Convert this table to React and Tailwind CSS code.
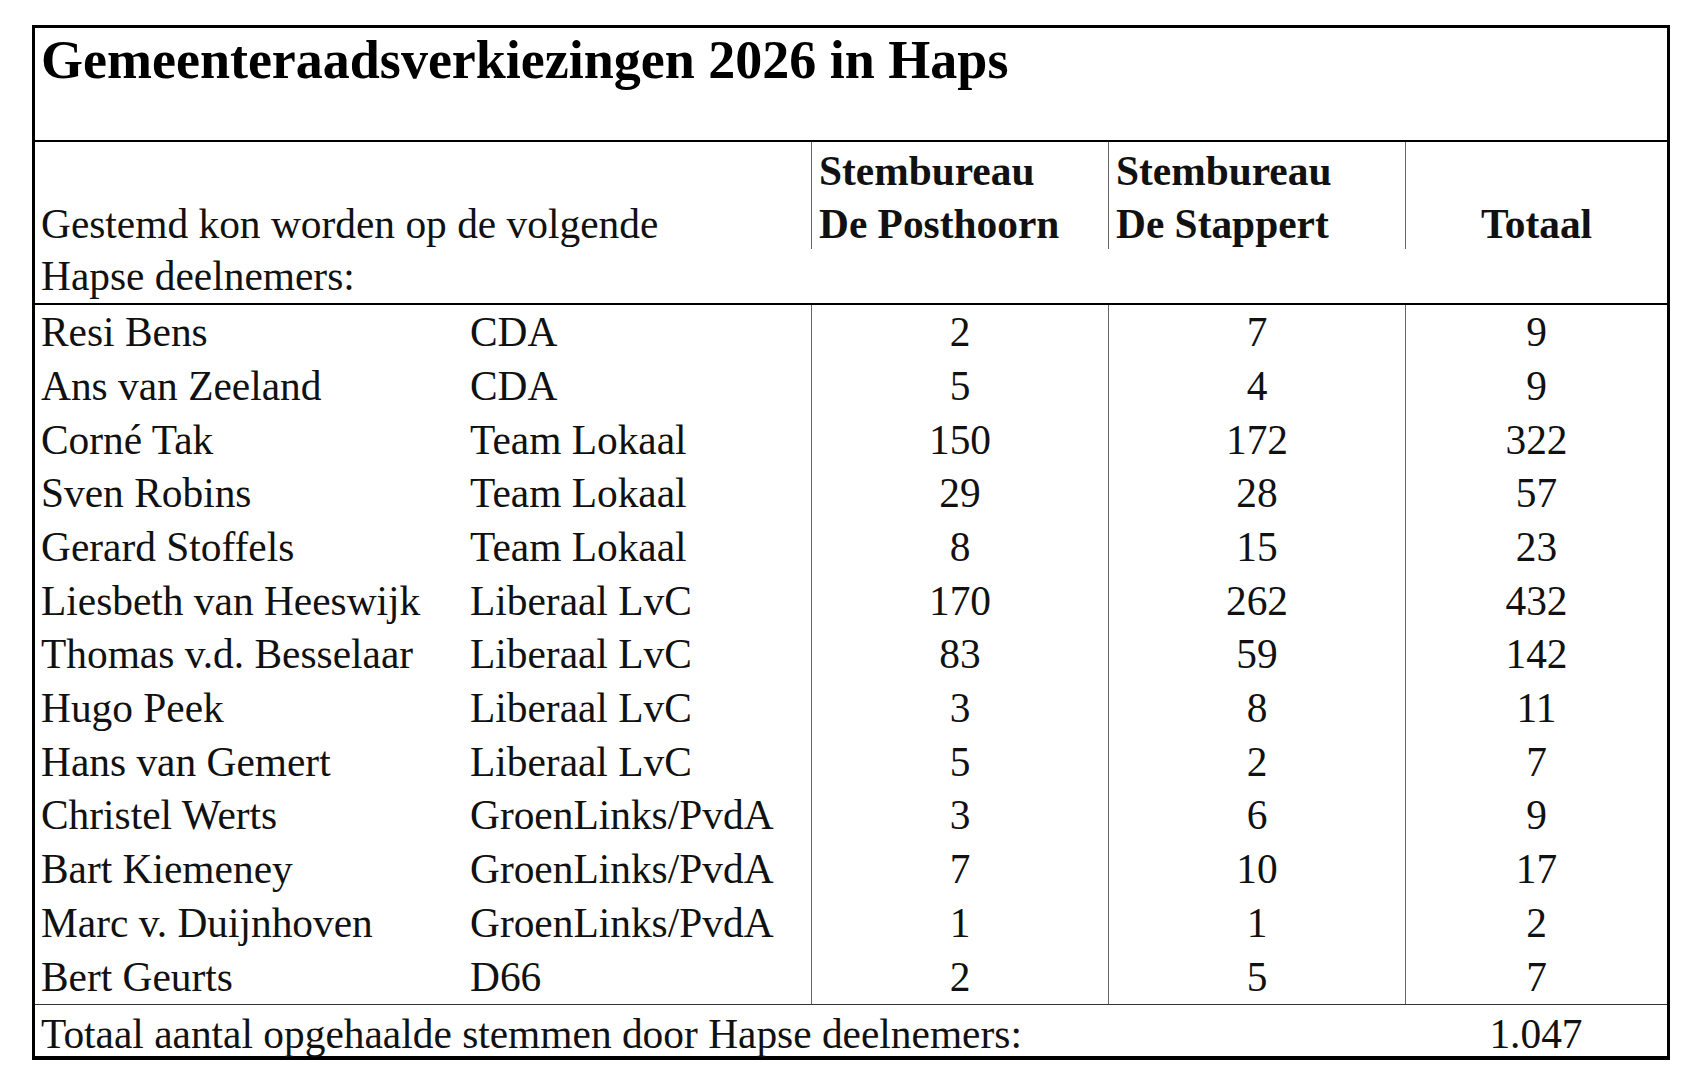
import React from "react";

const rows = [
  ["Resi Bens", "CDA", "2", "7", "9"],
  ["Ans van Zeeland", "CDA", "5", "4", "9"],
  ["Corné Tak", "Team Lokaal", "150", "172", "322"],
  ["Sven Robins", "Team Lokaal", "29", "28", "57"],
  ["Gerard Stoffels", "Team Lokaal", "8", "15", "23"],
  ["Liesbeth van Heeswijk", "Liberaal LvC", "170", "262", "432"],
  ["Thomas v.d. Besselaar", "Liberaal LvC", "83", "59", "142"],
  ["Hugo Peek", "Liberaal LvC", "3", "8", "11"],
  ["Hans van Gemert", "Liberaal LvC", "5", "2", "7"],
  ["Christel Werts", "GroenLinks/PvdA", "3", "6", "9"],
  ["Bart Kiemeney", "GroenLinks/PvdA", "7", "10", "17"],
  ["Marc v. Duijnhoven", "GroenLinks/PvdA", "1", "1", "2"],
  ["Bert Geurts", "D66", "2", "5", "7"],
];

const cols = "grid grid-cols-[776px_297px_297px_1fr]";

const App = () => {
  return (
    <div className="min-h-screen bg-white pt-[25px] pl-[32px] font-['Liberation_Serif',serif] text-[#111]">
      <div className="w-[1638px] border-t-[3px] border-x-[3px] border-b-4 border-black">
        {/* titel */}
        <div className="h-[114px] border-b-2 border-black pt-[5px] pl-[6px]">
          <h1 className="text-[54px] leading-[54px] font-bold text-black">
            Gemeenteraadsverkiezingen 2026 in Haps
          </h1>
        </div>

        {/* kop */}
        <div className={`${cols} border-b-2 border-black text-[41.4px] leading-[52.7px]`}>
          <div className="pl-[6px] pt-[3px]">
            <div>&nbsp;</div>
            <div>Gestemd kon worden op de volgende</div>
            <div>Hapse deelnemers:</div>
          </div>
          <div>
            <div className="border-l border-[#666] pl-[7px] pt-[3px] font-bold h-[107px]">
              <div>Stembureau</div>
              <div>De Posthoorn</div>
            </div>
          </div>
          <div>
            <div className="border-l border-[#666] pl-[7px] pt-[3px] font-bold h-[107px]">
              <div>Stembureau</div>
              <div>De Stappert</div>
            </div>
          </div>
          <div>
            <div className="border-l border-[#666] pt-[3px] font-bold h-[107px] text-center">
              <div>&nbsp;</div>
              <div>Totaal</div>
            </div>
          </div>
        </div>

        {/* deelnemers */}
        <div className="text-[41.4px] leading-[53.7px]">
          {rows.map((r, i) => (
            <div key={r[0]} className={cols}>
              <div className={`flex ${i === 0 ? "pt-[1px]" : ""}`}>
                <span className="w-[435px] pl-[6px] whitespace-nowrap">{r[0]}</span>
                <span className="whitespace-nowrap">{r[1]}</span>
              </div>
              <div className={`border-l border-[#666] text-center ${i === 0 ? "pt-[1px]" : ""}`}>{r[2]}</div>
              <div className={`border-l border-[#666] text-center ${i === 0 ? "pt-[1px]" : ""}`}>{r[3]}</div>
              <div className={`border-l border-[#666] text-center ${i === 0 ? "pt-[1px]" : ""}`}>{r[4]}</div>
            </div>
          ))}
        </div>

        {/* totaal */}
        <div className={`${cols} border-t border-[#333] h-[52px] pt-[6px] text-[41.4px] leading-[46px]`}>
          <div className="col-span-3 pl-[6px] whitespace-nowrap">
            Totaal aantal opgehaalde stemmen door Hapse deelnemers:
          </div>
          <div className="text-center">1.047</div>
        </div>
      </div>
    </div>
  );
};

export default App;
